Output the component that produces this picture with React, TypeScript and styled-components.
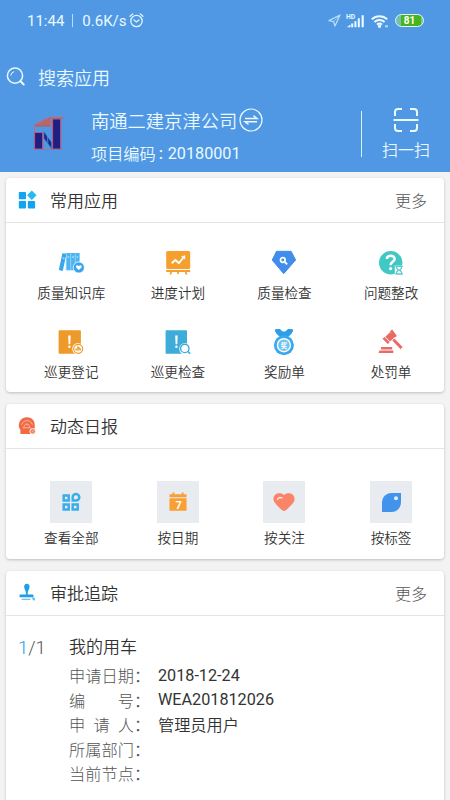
import React from "react";
import styled, { createGlobalStyle } from "styled-components";

const Global = createGlobalStyle`
  *, *::before, *::after { box-sizing: border-box; }
  html, body { margin: 0; background: #f3f3f3; }
  body {
    width: 450px;
    height: 800px;
    overflow: hidden;
    font-family: Roboto, "Noto Sans CJK SC", sans-serif;
    color: #333;
    white-space: nowrap;
  }
  svg { display: block; flex: none; overflow: visible; }
`;

const Screen = styled.div`
  height: 800px;
  display: flex;
  flex-direction: column;
  overflow: hidden;
  background: #f3f3f3;
`;

const Header = styled.header`
  height: 172px;
  flex: none;
  background: #5098e4;
  color: #eafaff;
`;

const StatusBar = styled.div`
  height: 41px;
  padding: 0 26px 0 27px;
  display: flex;
  align-items: center;
  justify-content: space-between;
`;

const StatusGroup = styled.div<{ $gap: number }>`
  display: flex;
  align-items: center;
  gap: ${(p) => p.$gap}px;
  font-size: 15px;
  line-height: 20px;
`;

const StatusDivider = styled.span`
  width: 1px;
  height: 13px;
  margin: 0 9px 0 8px;
  background: #b9dcf7;
`;

const Speed = styled.span`
  width: 47px;
`;

const Battery = styled.div`
  width: 29px;
  height: 13px;
  border: 1.5px solid #e3f8f4;
  border-radius: 7px;
  background: linear-gradient(90deg, #79bfb0 0 20%, #48b41c 20% 92%, #7fc596 92%);
  background-clip: padding-box;
  font-size: 10px;
  font-weight: 700;
  line-height: 11.5px;
  text-align: center;
  color: #fff;
`;

const SearchRow = styled.div`
  height: 72px;
  margin-bottom: -8px;
  padding-left: 6px;
  display: flex;
  align-items: center;
  gap: 12px;
  font-size: 18px;
  font-weight: 350;
`;

const Project = styled.div`
  height: 67px;
  padding: 3px 20px 0 33px;
  display: flex;
`;

const ProjectInfo = styled.div`
  margin-left: 24px;
  flex: 1;
`;

const ProjectName = styled.div`
  height: 25px;
  margin-top: -1px;
  display: flex;
  align-items: center;
  gap: 2px;
  font-size: 18.3px;
  font-weight: 350;
`;

const ProjectCode = styled.div`
  height: 24px;
  margin-top: 9px;
  display: flex;
  align-items: center;
  font-size: 16.2px;
  font-weight: 350;
`;

const CodeColon = styled.span`
  width: 12px;
  padding-left: 3px;
  font-weight: 500;
`;

const Latin = styled.span`
  font-weight: 400;
`;

const VerticalRule = styled.span`
  width: 1px;
  height: 46px;
  margin: 3px 20px 0 0;
  background: #d8f0fc;
`;

const ScanButton = styled.div`
  width: 48px;
  display: flex;
  flex-direction: column;
  align-items: center;
  gap: 7px;
  font-size: 16px;
  font-weight: 350;
  line-height: 24px;
`;

const Content = styled.main`
  flex: 1;
  min-height: 0;
  padding: 6px 6px 0;
  display: flex;
  flex-direction: column;
  gap: 12px;
`;

const Card = styled.section<{ $height: number }>`
  height: ${(p) => p.$height}px;
  flex: none;
  border-radius: 4px;
  background: #fff;
  box-shadow: 0 1px 3px rgba(0, 0, 0, 0.22);
`;

const CardHeader = styled.div`
  height: 45px;
  padding: 0 17px 0 12px;
  border-bottom: 1px solid #e4e4e4;
  display: flex;
  align-items: center;
`;

const CardTitle = styled.h2`
  flex: 1;
  margin: 0 0 0 14px;
  padding-bottom: 2px;
  font-size: 17px;
  font-weight: 350;
`;

const More = styled.span`
  padding-bottom: 1px;
  font-size: 16px;
  font-weight: 300;
  color: #555;
`;

const AppGrid = styled.div<{ $top: number; $row: number }>`
  padding: ${(p) => p.$top}px 0 0 12px;
  display: grid;
  grid-template-columns: repeat(4, 106.6px);
  grid-auto-rows: ${(p) => p.$row}px;
`;

const AppItem = styled.div<{ $gap: number }>`
  display: flex;
  flex-direction: column;
  align-items: center;
  gap: ${(p) => p.$gap}px;
  font-size: 13.6px;
  font-weight: 350;
  line-height: 20px;
`;

const Tile = styled.div`
  width: 42px;
  height: 42px;
  display: grid;
  place-items: center;
  background: #e8ebf0;
`;

const Approval = styled.div`
  padding: 19px 12px 0;
  display: flex;
`;

const Counter = styled.div`
  width: 51px;
  font-size: 18.5px;
  font-weight: 300;
  line-height: 26px;
  color: #555;
`;

const Current = styled.span`
  color: #259fe8;
`;

const ApprovalTitle = styled.div`
  height: 28px;
  font-size: 17px;
  font-weight: 350;
  line-height: 24px;
`;

const Field = styled.div`
  height: 24.55px;
  display: flex;
  align-items: center;
  font-size: 16.2px;
  font-weight: 350;
`;

const FieldLabel = styled.span`
  width: 65px;
  display: flex;
  justify-content: space-between;
  font-weight: 300;
  color: #555;
`;

const FieldColon = styled.span`
  width: 24px;
  color: #555;
`;

const AlarmIcon = () => (
  <svg width="15" height="15" viewBox="0 0 15 15" fill="none" stroke="#dff4fc" strokeWidth="1.3" strokeLinecap="round">
    <circle cx="7.5" cy="8" r="5.7" />
    <path d="M1 3.3 3.7 1M14 3.3 11.3 1M5 7l2.4 2L10 7" />
  </svg>
);

const LocationIcon = () => (
  <svg width="13" height="13" viewBox="0 0 13 13" fill="none" stroke="#b9dcf7" strokeWidth="1.3" strokeLinejoin="round">
    <path d="M12 1 1 6.6l4.6 1L7 12z" />
    <path d="M12 1 5.6 7.6" strokeWidth=".7" />
  </svg>
);

const SignalIcon = () => (
  <svg width="18" height="14" viewBox="0 0 18 14" fill="#eafaff">
    <text x="-1" y="5" fontSize="6.8" fontWeight="700">HD</text>
    <path d="M0 13.2 3.4 10.4v2.8zM4.2 9.5h2v3.7h-2zM7.4 7.2h2v6h-2zM10.8 4.2h2v9h-2zM14.6 1.2h2.2v12h-2.2z" />
  </svg>
);

const WifiIcon = () => (
  <svg width="18" height="14" viewBox="0 0 18 14" fill="none" stroke="#eafaff" strokeWidth="2">
    <path d="M.8 5.2a11.2 11.2 0 0 1 15.4 0M3.4 8a7.4 7.4 0 0 1 10.2 0M6 10.6a3.5 3.5 0 0 1 5 0" />
    <circle cx="8.5" cy="12.2" r=".7" />
    <path d="M14 12.3h3" stroke="#b5dcf6" />
  </svg>
);

const SearchIcon = () => (
  <svg width="20" height="20" viewBox="0 0 20 20" fill="none" stroke="#eafaff" strokeWidth="1.5" strokeLinecap="round">
    <circle cx="9" cy="8.7" r="7.6" />
    <path d="m14.5 14.3 3.2 3.2" strokeWidth="2" />
    <path d="M4.8 8.2a4 4 0 0 1 3-3.5" strokeWidth="1" />
  </svg>
);

const CompanyLogo = () => (
  <svg width="34" height="54" viewBox="0 -8 34 54">
    <path d="M1.5 9 17 .9h14.8L30 2.7H18v8H1.5z" fill="#9f6879" />
    <path d="M2 9.2 17 1.5h15M3 8h14M6 6h11M9.5 4H17" stroke="#d66161" strokeWidth="1" fill="none" />
    <path d="M1.5 16.5h8.2V33H1.5zM19.5 3h8.2v30h-8.2z" fill="#211e83" stroke="#b35b7b" strokeWidth="1.2" />
    <path d="M1.5 10v6M17.5 3v10" stroke="#c96872" strokeWidth="1" />
    <path d="m10.8 15 8 12v6.5l-8-11z" fill="#3477c5" />
    <path d="m11.2 16.5 2.7 3.8v5.6l-2.7-3.7zM15.3 22l2.8 4v5.2l-2.8-3.7z" fill="#202987" />
    <path d="M10.5 33.5h8.7" stroke="#a87294" />
  </svg>
);

const SwapIcon = () => (
  <svg width="24" height="24" viewBox="0 0 24 24" fill="none" stroke="#eafaff" strokeWidth="1.2">
    <circle cx="12" cy="12" r="11" />
    <path d="M6 10.5h12L14.5 7.7M18 13.7H6l3.5 2.8" strokeWidth="1.5" />
  </svg>
);

const ScanIcon = () => (
  <svg width="26" height="24" viewBox="0 0 26 24" fill="none" stroke="#eafaff" strokeWidth="2">
    <path d="M2 8V4q0-3 3-3h4M17 1h4q3 0 3 3v4M2 16v4q0 3 3 3h4M17 23h4q3 0 3-3v-4M.5 12h25" />
  </svg>
);

const AppsIcon = () => (
  <svg width="18" height="18" viewBox="0 0 18 18" fill="#12a4f0">
    <rect x=".8" y="1" width="7.2" height="7.3" rx=".8" />
    <rect x=".8" y="10" width="7.2" height="7.6" rx=".8" />
    <rect x="9.8" y="10" width="7.3" height="7.6" rx=".8" />
    <path d="m13.8-.4 4.8 4.7-4.8 4.7-4.7-4.7z" fill="#28b9f2" />
  </svg>
);

const DailyIcon = () => (
  <svg width="18" height="18" viewBox="0 0 18 18">
    <path d="M2.4 17v-4.3C.2 10.3.6 6.7 1.9 4.3 3.3 1.7 5.8.3 9 .3c4.7 0 7.7 3.4 7.7 7.5V17z" fill="#ef6a45" />
    <path d="M3.6 7.8a5.6 5.6 0 0 1 10.8 0M4.6 10.8h8.2M6.2 10.4C5.5 5.8 12 5.8 11.6 10.4M9 7v1.6" fill="none" stroke="#ffb596" strokeWidth="1" />
    <circle cx="14.7" cy="14.3" r="2.9" fill="#f6ab91" stroke="#fff" strokeWidth=".7" />
    <circle cx="14.7" cy="14.3" r="1.5" fill="none" stroke="#ef7653" strokeWidth="1" />
  </svg>
);

const StampIcon = () => (
  <svg width="18" height="18" viewBox="0 0 18 18" fill="#1c9fe6">
    <path d="M6.2 3a2.7 2.7 0 1 1 5.3 0c0 2-1.8 3.7-1.8 6v1.5h4.8q1 0 1 1v1.7H1.5v-1.7q0-1 1-1h5.4V9c0-2.300-1.7-4-1.700-6z" />
    <path d="M3.5 15.300h9" stroke="#6bbce8" strokeWidth="1.2" />
    <path d="m13.800 13.400 3 .4.5 2.600-2.400-.2z" fill="#65bfed" />
  </svg>
);

const LibraryIcon = () => (
  <svg width="26" height="26" viewBox="0 0 26 26">
    <path d="m4.400 3.200 4 .6L4.800 21l-4-1z" fill="#3ba5eb" />
    <path d="M7.800 3h13.800v17.200H8.300z" fill="#4cb4f2" />
    <path d="M8.500 3.500 8 20.500M12.700 3.500v17M17.200 3.500v17" stroke="#a5dbf9" strokeWidth=".8" />
    <path d="M9.500 7h1.800M14.200 7h1.800M18.500 7h1.600M4.500 8l2 .4" stroke="#d4effd" strokeWidth="1" />
    <circle cx="20.800" cy="17.500" r="5.600" fill="#3ba5eb" stroke="#fff" strokeWidth=".8" />
    <path d="m20.800 20-2.600-2.500q-1-2 1-2.300.9 0 1.600 1 .8-1 1.800-1 1.700.4.900 2.300z" fill="#fff" />
  </svg>
);

const PlanIcon = () => (
  <svg width="26" height="26" viewBox="0 0 26 26" fill="#f59f2d">
    <rect x="1.200" y="1" width="24" height="18" rx="1.500" />
    <rect x="1.200" y="20" width="24" height="2" />
    <path d="M5.300 22h1.800l-.8 2.600H4.400zM19.800 22h1.800l.9 2.600h-2zM12.300 22H14v2h-1.700z" />
    <path d="m6.700 13.200 3.700-3.200 3.500 3.200 4.600-5.700" fill="none" stroke="#fff" strokeWidth="1.900" />
    <path d="m16 6.500 4.300-1.300-.2 4.400z" fill="#fff" />
  </svg>
);

const InspectIcon = () => (
  <svg width="26" height="26" viewBox="0 0 26 26">
    <path d="M5.500 1.300h14.600l4.500 8.700L12.700 23.700 1.200 10z" fill="#418de9" stroke="#418de9" strokeLinejoin="round" />
    <circle cx="11.800" cy="10" r="2.300" fill="none" stroke="#fff" strokeWidth="1.700" />
    <path d="m13.700 12 2.500 2.300" stroke="#fff" strokeWidth="1.800" />
  </svg>
);

const QuestionIcon = () => (
  <svg width="26" height="26" viewBox="0 0 26 26" fill="none">
    <circle cx="12.700" cy="12.700" r="11.700" fill="#40c8c4" />
    <path d="M8.900 8.900c0-4.300 7.700-4.200 7.700-.2 0 3.200-4 3.100-4 6.500" stroke="#fff" strokeWidth="2.500" />
    <circle cx="12.600" cy="18.600" r="1.600" fill="#fff" />
    <path d="M16.800 15.600h8.500v9.600h-8.500z" fill="#fff" />
    <path d="M17.400 16.400h7.400M17.400 24h7.400M18.400 16.500q0 2.300 2.200 3.600-2.200 1.200-2.200 3.500M23.800 16.500q0 2.300-2.200 3.600 2.200 1.200 2.200 3.500" stroke="#5acbc8" strokeWidth="1.300" />
  </svg>
);

const PatrolIcon = ({ tone, search }: { tone: string; search?: boolean }) => (
  <svg width="26" height="26" viewBox="0 0 26 26" fill="none">
    <rect x=".6" y="1.200" width={search ? 21.4 : 22.3} height="23.500" rx=".8" fill={tone} />
    <path d="M10.200 6.500h2.500l-.4 8.800h-1.700z" fill="#fff" />
    <circle cx="11.400" cy="17.800" r="1.200" fill="#fff" />
    <circle cx="20" cy="19.800" r="5.800" fill="#fff" />
    {search ? (
      <>
        <circle cx="19.800" cy="19.400" r="4.200" stroke={tone} strokeWidth="1.400" />
        <path d="m22.700 22.400 2.600 2.400" stroke={tone} strokeWidth="1.500" />
      </>
    ) : (
      <>
        <circle cx="20.200" cy="19.800" r="4.500" stroke={tone} strokeWidth="1.200" />
        <path d="M18.200 21.600v-2M20 21.800v-3.600l2.200 2v1.400" stroke={tone} strokeWidth="1.500" />
      </>
    )}
  </svg>
);

const MedalIcon = () => (
  <svg width="26" height="26" viewBox="0 0 26 26">
    <path d="M5 0h4q2.200 2.800 3.900 2.800T17 0h4q1.500.2 1 2.300-1.400 3.300-5 5.700H9Q5.400 5.600 4 2.300 3.500.2 5 0z" fill="#2e9fe6" />
    <circle cx="12.900" cy="16.200" r="10" fill="#37a9ec" />
    <circle cx="12.900" cy="16.200" r="6.500" fill="#6dc2f2" stroke="#fff" strokeWidth="1.400" />
    <text x="9.700" y="18.500" fontSize="6.400" fill="#fff" fontWeight="700">奖</text>
  </svg>
);

const GavelIcon = () => (
  <svg width="26" height="26" viewBox="0 0 26 26" fill="#e96b64">
    <path d="M1.500 21.500h13.800v2.500H.5zM3 18h11.200v2.500H3z" />
    <path d="m4.500 9.700 2-1.800 5.300 5.300-2 1.900zM7.300 7.800l5-4.900 4.500 5.200-4.700 4.400zM12 2.300l2.200-1.900 4.700 6.500-2 1.500z" />
    <path d="m14.300 11.500 2-1.900L24.600 18l-2 2.300z" />
  </svg>
);

const AllIcon = () => (
  <svg width="18" height="18" viewBox="0 0 18 18" fill="none" stroke="#3baeea" strokeWidth="2.500">
    <path d="M1.700 2.500h5v5h-5zM1.700 11.500h5v5h-5zM10.700 11.500h5v5h-5zM10.700 7.600V4a3.300 3.300 0 1 1 3.300 3.600z" />
  </svg>
);

const CalendarIcon = () => (
  <svg width="18" height="18" viewBox="0 0 18 18" fill="#f8a034">
    <path d="M.5 1.300h17v3H.5zM.5 5.300h17v12.400H.5zM3.400-.6h2v3h-2zM12.600-.6h2v3h-2z" />
    <text x="6.500" y="15.600" fontSize="11" fontWeight="700" fill="#fff">7</text>
  </svg>
);

const HeartIcon = () => (
  <svg width="22" height="19" viewBox="0 0 22 19">
    <path d="M11 2.200C14-1 21.600-.2 21.600 6.200c0 3-3.600 6-7.800 10.400q-2.800 2.800-5.600 0C4 12.200.4 9 .4 6.200.4-.2 8-1 11 2.200z" fill="#f98468" />
    <path d="M4.500 6.400q1.200-2.700 4.500-1.500" fill="none" stroke="#ffe1d8" strokeWidth="1.400" strokeLinecap="round" />
  </svg>
);

const TagIcon = () => (
  <svg width="19" height="19" viewBox="0 0 19 19">
    <path d="M0 19v-9C0 4.300 4 0 9.500 0H19v9c0 5.700-4 10-9.500 10z" fill="#4293ec" />
    <circle cx="14" cy="5.300" r="2" fill="#e2f0fb" />
  </svg>
);

const commonApps = [
  { name: "质量知识库", icon: <LibraryIcon /> },
  { name: "进度计划", icon: <PlanIcon /> },
  { name: "质量检查", icon: <InspectIcon /> },
  { name: "问题整改", icon: <QuestionIcon /> },
  { name: "巡更登记", icon: <PatrolIcon tone="#ee9a2b" /> },
  { name: "巡更检查", icon: <PatrolIcon tone="#3eacd8" search /> },
  { name: "奖励单", icon: <MedalIcon /> },
  { name: "处罚单", icon: <GavelIcon /> },
];

const dailyFilters = [
  { name: "查看全部", icon: <AllIcon /> },
  { name: "按日期", icon: <CalendarIcon /> },
  { name: "按关注", icon: <HeartIcon /> },
  { name: "按标签", icon: <TagIcon /> },
];

const fields = [
  { label: "申请日期", value: <Latin>2018-12-24</Latin> },
  { label: "编号", value: <Latin>WEA201812026</Latin> },
  { label: "申请人", value: "管理员用户" },
  { label: "所属部门", value: "" },
  { label: "当前节点", value: "" },
];

export default function App() {
  return (
    <>
      <Global />
      <Screen>
        <Header>
          <StatusBar>
            <StatusGroup $gap={0}>
              <span>11:44</span>
              <StatusDivider />
              <Speed>0.6K/s</Speed>
              <AlarmIcon />
            </StatusGroup>
            <StatusGroup $gap={6}>
              <LocationIcon />
              <SignalIcon />
              <WifiIcon />
              <Battery>81</Battery>
            </StatusGroup>
          </StatusBar>
          <SearchRow>
            <SearchIcon />
            <span>搜索应用</span>
          </SearchRow>
          <Project>
            <CompanyLogo />
            <ProjectInfo>
              <ProjectName>南通二建京津公司<SwapIcon /></ProjectName>
              <ProjectCode>项目编码<CodeColon>:</CodeColon><Latin>20180001</Latin></ProjectCode>
            </ProjectInfo>
            <VerticalRule />
            <ScanButton>
              <ScanIcon />
              <span>扫一扫</span>
            </ScanButton>
          </Project>
        </Header>
        <Content>
          <Card $height={214}>
            <CardHeader>
              <AppsIcon />
              <CardTitle>常用应用</CardTitle>
              <More>更多</More>
            </CardHeader>
            <AppGrid $top={27} $row={78.5}>
              {commonApps.map((app) => (
                <AppItem key={app.name} $gap={7}>
                  {app.icon}
                  <span>{app.name}</span>
                </AppItem>
              ))}
            </AppGrid>
          </Card>
          <Card $height={155}>
            <CardHeader>
              <DailyIcon />
              <CardTitle>动态日报</CardTitle>
            </CardHeader>
            <AppGrid $top={32} $row={78}>
              {dailyFilters.map((item) => (
                <AppItem key={item.name} $gap={5}>
                  <Tile>{item.icon}</Tile>
                  <span>{item.name}</span>
                </AppItem>
              ))}
            </AppGrid>
          </Card>
          <Card $height={240}>
            <CardHeader>
              <StampIcon />
              <CardTitle>审批追踪</CardTitle>
              <More>更多</More>
            </CardHeader>
            <Approval>
              <Counter><Current>1</Current>/1</Counter>
              <div>
                <ApprovalTitle>我的用车</ApprovalTitle>
                {fields.map((field) => (
                  <Field key={field.label}>
                    <FieldLabel>
                      {[...field.label].map((char) => <span key={char}>{char}</span>)}
                    </FieldLabel>
                    <FieldColon>：</FieldColon>
                    {field.value}
                  </Field>
                ))}
              </div>
            </Approval>
          </Card>
        </Content>
      </Screen>
    </>
  );
}
